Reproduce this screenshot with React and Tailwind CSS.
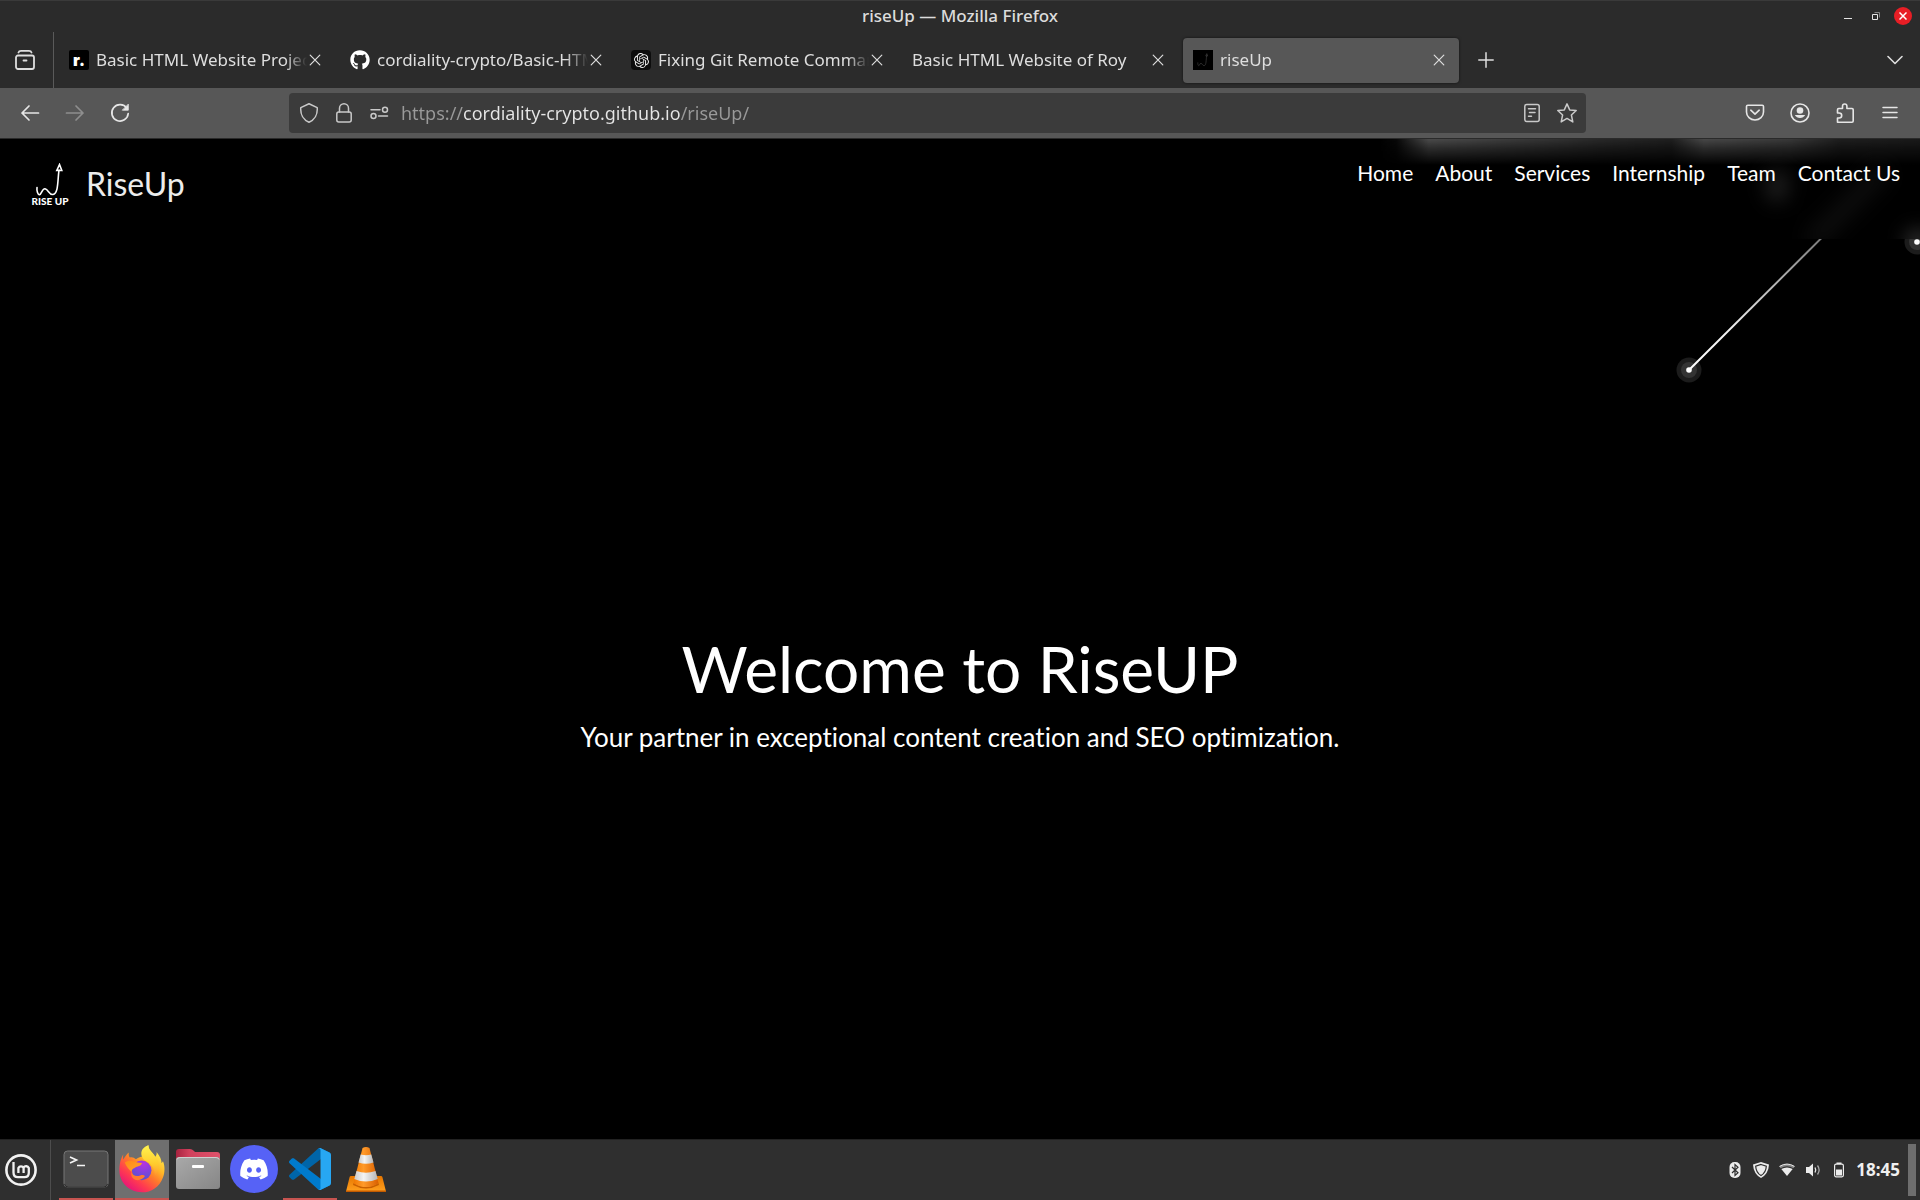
import React from "react";
import { FaGithub, FaDiscord } from "react-icons/fa";
import { SiOpenai } from "react-icons/si";

/* ---------- small line icons ---------- */

function Line({ size = 20, box = 20, width = 1.5, children, className = "" }) {
  return (
    <svg
      width={size}
      height={size}
      viewBox={`0 0 ${box} ${box}`}
      fill="none"
      stroke="currentColor"
      strokeWidth={width}
      strokeLinecap="round"
      strokeLinejoin="round"
      className={`shrink-0 ${className}`}
      aria-hidden="true"
    >
      {children}
    </svg>
  );
}

const CloseGlyph = () => (
  <Line size={12} box={12} width={1.2}>
    <path d="M1.2 1.2 10.8 10.8M10.8 1.2 1.2 10.8" />
  </Line>
);

const RecentIcon = () => (
  <Line size={22} box={22} width={1.8}>
    <rect x="2" y="6.5" width="18" height="13.5" rx="2" />
    <path d="M4.500 3.500Q5 1.900 7 1.900H15Q17 1.900 17.500 3.500M9.500 11.500h3" />
  </Line>
);

const BackIcon = () => (
  <Line width={1.7}>
    <path d="M18.500 10H2M9 3 2 10l7 7" />
  </Line>
);

const ForwardIcon = () => (
  <Line width={1.7}>
    <path d="M1.500 10H18M11 3l7 7-7 7" />
  </Line>
);

const ReloadIcon = () => (
  <Line width={1.7}>
    <path d="M16.800 5.200A8.200 8.200 0 1 0 18.200 10.500" />
    <path d="M18.300 1.500V7.200H12.600Z" fill="currentColor" strokeWidth="0.8" />
  </Line>
);

const ShieldIcon = () => (
  <Line width={1.5}>
    <path d="M10 .8 18.200 4.600C18.800 11.500 15.500 17 10 19.200 4.500 17 1.200 11.500 1.800 4.600Z" />
  </Line>
);

const LockIcon = () => (
  <Line width={1.5}>
    <rect x="2.800" y="9" width="14.400" height="10" rx="2" />
    <path d="M5.500 9V5.300a4.500 4.500 0 0 1 9 0V9" />
  </Line>
);

const PermissionsIcon = () => (
  <Line width={1.5}>
    <circle cx="16" cy="6.800" r="2.500" />
    <circle cx="4.500" cy="13" r="2.500" />
    <path d="M2 6.800h9M9.500 13h9" />
  </Line>
);

const ReaderIcon = () => (
  <Line width={1.5}>
    <rect x="2.800" y="1.500" width="14.400" height="17" rx="2" />
    <path d="M6.500 5.800h7M7.500 9.500h5.500M6.500 13.200h3" />
  </Line>
);

const StarIcon = () => (
  <Line width={1.5}>
    <path d="M10 .9 12.700 6.900 19.200 7.500 14.400 12 15.800 18.900 10 15.400 4.200 18.900 5.600 12 .8 7.500 7.300 6.900Z" />
  </Line>
);

const PocketIcon = () => (
  <Line width={1.6}>
    <path d="M2.800 2.300H17.200Q18.500 2.300 18.500 3.600V9A8.500 8 0 0 1 1.500 9V3.600Q1.500 2.300 2.800 2.300ZM5.800 7.200 10 11.200 14.200 7.200" />
  </Line>
);

const AccountIcon = () => (
  <Line width={1.6}>
    <circle cx="10" cy="10" r="9" />
    <circle cx="10" cy="7.500" r="3.300" fill="currentColor" stroke="none" />
    <path d="M4.800 12H15.200A6 6 0 0 1 4.800 12Z" fill="currentColor" stroke="none" />
  </Line>
);

const PuzzleIcon = () => (
  <Line width={1.6}>
    <path d="M2.500 19.200V15h1.700a2.400 2.400 0 0 0 0-5H2.500V6.700Q2.500 5.500 3.700 5.500H7.500V3.200a2.200 2.200 0 0 1 4.400 0V5.500H17Q18.200 5.500 18.200 6.700V18Q18.200 19.200 17 19.200Z" />
  </Line>
);

const MenuIcon = () => (
  <Line width={1.5}>
    <path d="M3 4.500h14M3 9.500h14M3 14.500h14" />
  </Line>
);

/* ---------- browser chrome ---------- */

function TitleBar() {
  return (
    <header className="grid h-8 grid-cols-[1fr_auto_1fr] items-center border-t border-[#3a3a3a] px-2 pb-[2px]">
      <span />
      <span className="text-[17px] leading-6 font-medium text-[#dcdcdc]">riseUp — Mozilla Firefox</span>
      <div className="flex items-center justify-end gap-2 text-[#e4e4e4]">
        <button type="button" aria-label="Minimize" className="flex h-5 w-5 items-center justify-center">
          <svg width="10" height="10" viewBox="0 0 10 10" aria-hidden="true">
            <path d="M1 7h8v1H1z" fill="currentColor" />
          </svg>
        </button>
        <button type="button" aria-label="Restore" className="flex h-5 w-5 items-center justify-center">
          <svg width="10" height="10" viewBox="0 0 10 10" fill="none" aria-hidden="true">
            <path d="M3.500 1.500H8.500V6.500" stroke="#858585" />
            <path d="M1.500 3.500h5v5h-5z" stroke="currentColor" />
          </svg>
        </button>
        <button
          type="button"
          aria-label="Close window"
          className="flex h-[18px] w-[18px] items-center justify-center rounded-full bg-[#e81e25] text-white"
        >
          <svg width="8" height="8" viewBox="0 0 8 8" stroke="currentColor" strokeWidth="1.500" aria-hidden="true">
            <path d="M.5.5l7 7M7.500.5l-7 7" />
          </svg>
        </button>
      </div>
    </header>
  );
}

const ArrowMark = ({ className }) => (
  <svg viewBox="0 0 40 34" className={className} fill="none" stroke="currentColor" strokeWidth="1.600" aria-hidden="true">
    <path d="M7 24.500C6.500 28 8 32 9.500 31.800C11.500 31.500 12 25.500 15 25.800C18.500 26.500 19 32 23 31.500C28.500 30.500 27.500 18 29 7" strokeLinecap="round" />
    <path d="M29.500 1.500 26.800 7.500H31.800Z" />
  </svg>
);

const tabs = [
  {
    title: "Basic HTML Website Project",
    icon: (
      <span className="flex h-5 w-5 items-center justify-center rounded-xs bg-black font-['Inter',sans-serif] text-base leading-5 font-black text-white">
        r.
      </span>
    ),
  },
  { title: "cordiality-crypto/Basic-HTML", icon: <FaGithub size={20} color="#fff" /> },
  {
    title: "Fixing Git Remote Command",
    icon: (
      <span className="flex h-5 w-5 items-center justify-center rounded-sm bg-[#0d0d0d]">
        <SiOpenai size={15} color="#f0f0f0" />
      </span>
    ),
  },
  { title: "Basic HTML Website of Roy" },
  {
    title: "riseUp",
    active: true,
    icon: (
      <span className="flex h-5 w-5 items-center justify-center bg-black text-[#444]">
        <ArrowMark className="w-4" />
      </span>
    ),
  },
];

function Tab({ title, icon, active }) {
  return (
    <div
      className={`flex h-[45px] w-[276px] min-w-0 items-center rounded pr-3 pl-[10px] ${
        active ? "bg-[#575757] shadow-[0_0_3px_rgba(0,0,0,0.6)]" : ""
      }`}
    >
      <button type="button" role="tab" aria-selected={Boolean(active)} className="flex min-w-0 flex-1 items-center gap-[7px]">
        {icon && <span className="shrink-0">{icon}</span>}
        <span className="flex-1 overflow-hidden mask-r-from-[calc(100%-22px)] text-left text-[17px] leading-6 whitespace-nowrap text-[#dedede]">
          {title}
        </span>
      </button>
      <button type="button" aria-label={`Close ${title}`} className="flex h-6 w-4 shrink-0 items-center justify-center text-[#dedede]">
        <CloseGlyph />
      </button>
    </div>
  );
}

function TabStrip() {
  return (
    <div className="flex h-14 items-center text-[#dedede]">
      <div className="flex w-[54px] shrink-0 self-stretch border-r border-[#5a5a5a] pr-[3px]">
        <button type="button" aria-label="Recent browsing" className="flex flex-1 items-center justify-center">
          <RecentIcon />
        </button>
      </div>
      <div role="tablist" className="ml-[5px] flex min-w-0 gap-[5px]">
        {tabs.map((tab) => (
          <Tab key={tab.title} {...tab} />
        ))}
      </div>
      <button type="button" aria-label="New tab" className="ml-[9px] flex h-9 w-9 items-center justify-center">
        <Line size={16} box={16} width={1.5}>
          <path d="M8 .8v14.400M.8 8h14.400" />
        </Line>
      </button>
      <button type="button" aria-label="List all tabs" className="mr-[7px] ml-auto flex h-9 w-9 items-center justify-center">
        <Line size={16} box={16} width={1.6}>
          <path d="M1 4.500 8 11.500 15 4.500" />
        </Line>
      </button>
    </div>
  );
}

function ToolButton({ label, dim, children }) {
  return (
    <button
      type="button"
      aria-label={label}
      className={`flex h-10 w-10 items-center justify-center ${dim ? "text-[#8e8e8e]" : "text-[#e6e6e6]"}`}
    >
      {children}
    </button>
  );
}

function UrlButton({ label, children }) {
  return (
    <button type="button" aria-label={label} className="flex h-10 w-[35px] shrink-0 items-center justify-center">
      {children}
    </button>
  );
}

function Toolbar() {
  return (
    <div className="flex h-[51px] items-center border-b border-[#2a2a2a] bg-[#575757] px-[10px]">
      <div className="flex gap-[5px]">
        <ToolButton label="Back"><BackIcon /></ToolButton>
        <ToolButton label="Forward" dim><ForwardIcon /></ToolButton>
        <ToolButton label="Reload"><ReloadIcon /></ToolButton>
      </div>
      <div className="mx-[149px] flex h-10 min-w-0 flex-1 items-center rounded bg-[#3b3b3b] px-[2px] text-[#c9c9c9]">
        <UrlButton label="Tracking protection"><ShieldIcon /></UrlButton>
        <UrlButton label="Connection security"><LockIcon /></UrlButton>
        <UrlButton label="Permissions"><PermissionsIcon /></UrlButton>
        <input
          type="text"
          aria-label="Address"
          defaultValue="https://cordiality-crypto.github.io/riseUp/"
          className="ml-[5px] min-w-0 flex-1 bg-[linear-gradient(90deg,#9a9a9a_62px,#e6e6e6_62px,#e6e6e6_280px,#9a9a9a_280px)] bg-clip-text text-lg text-transparent outline-none"
        />
        <UrlButton label="Reader view"><ReaderIcon /></UrlButton>
        <UrlButton label="Bookmark this page"><StarIcon /></UrlButton>
      </div>
      <div className="flex gap-[5px]">
        <ToolButton label="Save to Pocket"><PocketIcon /></ToolButton>
        <ToolButton label="Account"><AccountIcon /></ToolButton>
        <ToolButton label="Extensions"><PuzzleIcon /></ToolButton>
        <ToolButton label="Menu"><MenuIcon /></ToolButton>
      </div>
    </div>
  );
}

/* ---------- web page ---------- */

const links = ["Home", "About", "Services", "Internship", "Team", "Contact Us"];

function HeaderGlow() {
  return (
    <svg width="540" height="100" viewBox="0 0 540 100" className="pointer-events-none absolute top-0 right-0" aria-hidden="true">
      <defs>
        <linearGradient id="band" x1="0" x2="1" y1="0" y2="0">
          <stop offset="0" stopColor="#fff" stopOpacity="0" />
          <stop offset="0.030" stopColor="#fff" stopOpacity="0.030" />
          <stop offset="0.090" stopColor="#fff" stopOpacity="0.290" />
          <stop offset="0.150" stopColor="#fff" stopOpacity="0.270" />
          <stop offset="0.400" stopColor="#fff" stopOpacity="0.160" />
          <stop offset="0.540" stopColor="#fff" stopOpacity="0.120" />
          <stop offset="0.600" stopColor="#fff" stopOpacity="0.280" />
          <stop offset="0.760" stopColor="#fff" stopOpacity="0.220" />
          <stop offset="0.850" stopColor="#fff" stopOpacity="0.120" />
          <stop offset="1" stopColor="#fff" stopOpacity="0.100" />
        </linearGradient>
        <linearGradient id="fall" x1="0" x2="0" y1="0" y2="1">
          <stop offset="0" stopColor="#fff" />
          <stop offset="0.350" stopColor="#fff" stopOpacity="0.600" />
          <stop offset="1" stopColor="#fff" stopOpacity="0" />
        </linearGradient>
        <mask id="fade">
          <rect width="540" height="26" fill="url(#fall)" />
        </mask>
        <filter id="soft" x="-100%" y="-100%" width="300%" height="300%">
          <feGaussianBlur stdDeviation="10" />
        </filter>
      </defs>
      <rect width="540" height="26" fill="url(#band)" mask="url(#fade)" />
      <g filter="url(#soft)">
        <ellipse cx="397" cy="47" rx="11" ry="16" fill="#fff" fillOpacity="0.130" />
        <path d="M430 104 505 30" stroke="#fff" strokeOpacity="0.050" strokeWidth="20" />
        <circle cx="538" cy="103" r="12" fill="#fff" fillOpacity="0.220" />
      </g>
    </svg>
  );
}

function Particles() {
  return (
    <svg width="260" height="160" viewBox="0 0 260 160" className="pointer-events-none absolute top-0 right-0" aria-hidden="true">
      <defs>
        <linearGradient id="trail" gradientUnits="userSpaceOnUse" x1="160" y1="0" x2="29" y2="131">
          <stop offset="0" stopColor="#7c7c7c" />
          <stop offset="0.700" stopColor="#f0f0f0" />
          <stop offset="1" stopColor="#fff" />
        </linearGradient>
      </defs>
      {[[29, 131], [257, 3]].map(([x, y]) => (
        <g key={x}>
          <circle cx={x} cy={y} r="12.500" fill="#1c1c1c" />
          <circle cx={x} cy={y} r="8" fill="#333" />
          <circle cx={x} cy={y} r="2.800" fill="#fff" />
        </g>
      ))}
      <path d="M162.500-2 29 131" stroke="url(#trail)" strokeWidth="2" />
    </svg>
  );
}

function WebPage() {
  return (
    <div className="flex flex-1 flex-col bg-black font-['Lato',sans-serif] text-white [font-variant-ligatures:none]">
      <header className="relative flex h-[100px] items-start justify-between overflow-hidden pr-5 pl-7">
        <HeaderGlow />
        <a href="#home" className="relative flex items-center gap-[14px] pt-6 text-[32px] leading-[42px] text-[#ececec]">
          <span className="flex w-11 flex-col items-center text-white">
            <ArrowMark className="w-10" />
            <span className="text-[10px] leading-[8px] font-black whitespace-nowrap">RISE UP</span>
          </span>
          RiseUp
        </a>
        <nav aria-label="Main" className="relative pt-[19px]">
          <ul className="flex gap-[22px]">
            {links.map((link) => (
              <li key={link}>
                <a href={`#${link}`} className="text-[21px] leading-[30px]">{link}</a>
              </li>
            ))}
          </ul>
        </nav>
      </header>
      <main className="relative flex flex-1 flex-col items-center justify-center gap-[14px] pt-[10px]">
        <Particles />
        <h1 className="text-[64px] leading-[72px]">Welcome to RiseUP</h1>
        <p className="text-[26px] leading-9">Your partner in exceptional content creation and SEO optimization.</p>
      </main>
    </div>
  );
}

/* ---------- desktop panel ---------- */

const MintLogo = () => (
  <svg width="32" height="32" viewBox="0 0 32 32" fill="none" stroke="#f2f2f2" aria-hidden="true">
    <circle cx="16" cy="16" r="14.600" strokeWidth="2.600" />
    <path d="M8.500 8V18.500Q8.500 23.200 13 23.200H19.500Q23.800 23.200 23.800 18.800V14A3 3 0 0 0 18.600 13.500V19M18.600 14A2.900 2.900 0 0 0 13.400 14V19" strokeWidth="2.300" />
  </svg>
);

const TerminalIcon = () => (
  <svg width="46" height="38" viewBox="0 0 46 38" aria-hidden="true">
    <rect x="1" y="1" width="44" height="36" rx="3.500" fill="#4c4c4c" stroke="#777" />
    <path d="M1.500 34Q2 37 5 37H41Q44 37 44.500 34" fill="none" stroke="#2a2a2a" />
    <path d="M7 7 13.500 10 7 13M14 15.500H22" fill="none" stroke="#f5f5f5" strokeWidth="1.700" />
  </svg>
);

const FirefoxIcon = () => (
  <svg width="46" height="48" viewBox="0 0 136 142" aria-hidden="true">
    <defs>
      <linearGradient id="ffBody" x1="0.850" y1="0.100" x2="0.200" y2="0.950">
        <stop offset="0" stopColor="#fff14f" />
        <stop offset="0.300" stopColor="#ffb827" />
        <stop offset="0.500" stopColor="#ff7a2b" />
        <stop offset="0.750" stopColor="#ff3a50" />
        <stop offset="1" stopColor="#e5127c" />
      </linearGradient>
      <radialGradient id="ffGlobe" cx="0.600" cy="0.150" r="0.900">
        <stop offset="0" stopColor="#b833e1" />
        <stop offset="0.500" stopColor="#8341dd" />
        <stop offset="1" stopColor="#5157c9" />
      </radialGradient>
      <linearGradient id="ffFace" x1="0" y1="0" x2="1" y2="1">
        <stop offset="0" stopColor="#ff8a16" />
        <stop offset="1" stopColor="#ffa52d" />
      </linearGradient>
      <linearGradient id="ffTail" x1="0.500" y1="0" x2="0.500" y2="1">
        <stop offset="0" stopColor="#fff44f" />
        <stop offset="0.600" stopColor="#ffcb2d" />
        <stop offset="1" stopColor="#ff9640" stopOpacity="0" />
      </linearGradient>
    </defs>
    <path
      d="M13 27C11 34 12 40 13 43C18 33 23 27 29 22C28 29 29 34 32 37C39 35 45 38 50 42C58 36 65 35 70 35C64 24 72 8 87 1C87 16 99 20 107 35C111 31 112 26 111 21C121 33 126 43 126 54L130 48C137 62 135 85 130 96C119 125 96 140 68 140C30 140 1 111 1 75C1 60 4 40 13 27Z"
      fill="url(#ffBody)"
    />
    <path d="M87 1C87 16 99 20 107 35C120 51 118 79 106 94C107 75 98 56 82 49C68 43 61 25 70 12Q76 5 87 1Z" fill="url(#ffTail)" />
    <circle cx="67" cy="75" r="29" fill="url(#ffGlobe)" />
    <path d="M17 52C25 46 35 45 44 49Q54 53 68 53C67 60 58 63 50 65C47 69 38 69 37 79C30 74 22 64 17 52Z" fill="url(#ffFace)" />
    <path d="M37 79C40 92 52 94 63 90C69 87 74 89 77 92C70 104 54 107 45 101C37 96 34 88 37 79Z" fill="#ff7a30" />
  </svg>
);

const FolderIcon = () => (
  <svg width="46" height="42" viewBox="0 0 46 42" aria-hidden="true">
    <defs>
      <linearGradient id="fdBack" x1="0" x2="1">
        <stop offset="0" stopColor="#a82340" />
        <stop offset="0.300" stopColor="#d1405c" />
        <stop offset="1" stopColor="#e0526b" />
      </linearGradient>
      <linearGradient id="fdFront" x1="0" y1="0" x2="1" y2="1">
        <stop offset="0" stopColor="#a9a9a9" />
        <stop offset="1" stopColor="#868686" />
      </linearGradient>
    </defs>
    <path d="M1 4Q1 1 4 1H15Q17 1 19 3L20 4H42Q45 4 45 7V20H1Z" fill="url(#fdBack)" />
    <rect x="1" y="9" width="44" height="32" rx="3" fill="url(#fdFront)" />
    <path d="M2 11.500Q2.500 9.500 5 9.500H41Q43.500 9.500 44 11.500" fill="none" stroke="#cfcfcf" />
    <rect x="17" y="17" width="12" height="3" rx="1" fill="#fff" />
  </svg>
);

const DiscordIcon = () => (
  <span className="flex h-12 w-12 items-center justify-center rounded-full bg-[#5662f6]">
    <FaDiscord size={30} color="#fff" />
  </span>
);

const CodeIcon = () => (
  <svg width="42" height="42" viewBox="0 0 100 100" aria-hidden="true">
    <path fill="#0065A9" d="M96.460 10.800 75.860.880C73.470-.270 70.620.210 68.750 2.080L1.300 63.580C-.520 65.240-.510 68.090 1.300 69.750L6.810 74.750C8.300 76.100 10.530 76.200 12.130 74.990L93.360 13.370C96.090 11.300 100 13.250 100 16.670V16.430C100 14.030 98.620 11.840 96.460 10.800Z" />
    <path fill="#007ACC" d="M96.460 89.200 75.860 99.120C73.470 100.270 70.620 99.790 68.750 97.920L1.300 36.420C-.520 34.760-.510 31.910 1.300 30.250L6.810 25.250C8.300 23.900 10.530 23.800 12.130 25.010L93.360 86.630C96.090 88.700 100 86.750 100 83.330V83.570C100 85.970 98.620 88.160 96.460 89.200Z" />
    <path fill="#27a7f3" d="M75.860 99.130C73.470 100.270 70.620 99.790 68.750 97.920C71.060 100.220 75 98.590 75 95.330V4.670C75 1.410 71.060-.220 68.750 2.080C70.620.210 73.470-.270 75.860.870L96.460 10.780C98.620 11.820 100 14.010 100 16.410V83.590C100 85.990 98.620 88.180 96.460 89.220Z" />
  </svg>
);

const ConeIcon = () => (
  <svg width="42" height="46" viewBox="0 0 42 46" aria-hidden="true">
    <defs>
      <linearGradient id="cone" x1="0" x2="1">
        <stop offset="0" stopColor="#f07800" />
        <stop offset="0.400" stopColor="#ff9a2a" />
        <stop offset="1" stopColor="#d95f00" />
      </linearGradient>
      <linearGradient id="stripe" x1="0" x2="1">
        <stop offset="0" stopColor="#c9c9c9" />
        <stop offset="0.400" stopColor="#f4f4f4" />
        <stop offset="1" stopColor="#b5b5b5" />
      </linearGradient>
      <linearGradient id="base" x1="0" y1="0" x2="0" y2="1">
        <stop offset="0" stopColor="#e67600" />
        <stop offset="1" stopColor="#ffa01e" />
      </linearGradient>
    </defs>
    <path d="M6 30H36Q37 30 37.400 31L41 45.500H1L4.600 31Q5 30 6 30Z" fill="url(#base)" />
    <path d="M1 44.500H41V46H1Z" fill="#c35b00" />
    <path d="M8.500 37Q21 45 33.500 37L34 39Q21 46 8 39Z" fill="#c96000" />
    <path d="M17.500 2Q21 0 24.500 2L33.500 37Q28 41 21 41T8.500 37Z" fill="url(#cone)" />
    <path d="M15.700 8.500Q21 10 26.300 8.500L28.500 16.500Q21 19 13.500 16.500Z" fill="url(#stripe)" />
    <path d="M11.500 25Q21 28.500 30.500 25L32.700 33Q21 38 9.300 33Z" fill="url(#stripe)" />
  </svg>
);

const apps = [
  { name: "Terminal", icon: <TerminalIcon />, running: true },
  { name: "Firefox", icon: <FirefoxIcon />, running: true, focused: true },
  { name: "Files", icon: <FolderIcon /> },
  { name: "Discord", icon: <DiscordIcon /> },
  { name: "Visual Studio Code", icon: <CodeIcon />, running: true },
  { name: "VLC", icon: <ConeIcon /> },
];

const tray = [
  {
    name: "Bluetooth",
    icon: (
      <svg width="12" height="16" viewBox="0 0 12 16" aria-hidden="true">
        <rect x="0.500" width="11" height="16" rx="5" fill="#ececec" />
        <path d="M3 5 9 10.800 6 13.500V2.500L9 5.200 3 11" fill="none" stroke="#2f2f2f" strokeWidth="1.200" />
      </svg>
    ),
  },
  {
    name: "Firewall",
    icon: (
      <svg width="16" height="16" viewBox="0 0 16 16" aria-hidden="true">
        <path d="M8 0 16 2.500Q15.500 12 8 16 .5 12 0 2.500Z" fill="#ececec" />
        <path d="M8 2.500 13.300 4.200Q13 10.500 8 13.600 3 10.500 2.700 4.200Z" fill="#ececec" stroke="#2f2f2f" strokeWidth="1.200" />
      </svg>
    ),
  },
  {
    name: "Wi-Fi",
    icon: (
      <svg width="16" height="16" viewBox="0 0 16 16" aria-hidden="true">
        <path d="M.3 4.500Q8-.5 15.700 4.500L14.300 6.200Q8 2.500 1.700 6.200Z" fill="#8a8a8a" />
        <path d="M.5 4.400Q8-.3 15.500 4.400" fill="none" stroke="#ececec" />
        <path d="M2.300 7Q8 3.800 13.700 7L8 14Z" fill="#ececec" />
      </svg>
    ),
  },
  {
    name: "Volume",
    icon: (
      <svg width="16" height="16" viewBox="0 0 16 16" aria-hidden="true">
        <path d="M1 5H4L8 1.500V14.500L4 11H1Z" fill="#ececec" />
        <path d="M10 5.500Q11.500 8 10 10.500" fill="none" stroke="#ececec" strokeWidth="1.300" />
        <path d="M12.500 3.500Q15.800 8 12.500 12.500" fill="none" stroke="#a8a8a8" strokeWidth="1.300" />
      </svg>
    ),
  },
  {
    name: "Battery",
    icon: (
      <svg width="12" height="16" viewBox="0 0 12 16" aria-hidden="true">
        <path d="M3.500.5h5V2h-5z" fill="#ececec" />
        <rect x="1.600" y="2.200" width="8.800" height="12.600" rx="1.500" fill="none" stroke="#ececec" strokeWidth="1.200" />
        <path d="M3 7.500h6v6H3z" fill="#ececec" />
      </svg>
    ),
  },
];

function Panel() {
  return (
    <footer className="flex h-[61px] items-stretch border-t border-[#222] bg-[#2f2f2f]">
      <button type="button" aria-label="Menu" className="flex w-[51px] items-center border-r border-[#4d4d4d] pl-[5px]">
        <MintLogo />
      </button>
      <div className="ml-2 flex gap-[2px]">
        {apps.map(({ name, icon, running, focused }) => (
          <button
            key={name}
            type="button"
            aria-label={name}
            className={`flex w-[54px] items-center justify-center border-b-2 ${running ? "border-[#c75450]" : "border-transparent"} ${
              focused ? "bg-[#6f6f6f]" : ""
            }`}
          >
            {icon}
          </button>
        ))}
      </div>
      <div className="ml-auto flex items-center gap-2">
        {tray.map(({ name, icon }) => (
          <button key={name} type="button" aria-label={name} className="flex h-6 w-[18px] items-center justify-center">
            {icon}
          </button>
        ))}
        <time className="text-[17px] leading-6 font-bold text-[#f0f0f0]">18:45</time>
      </div>
      <button type="button" aria-label="Show desktop" className="mx-1 my-1 ml-2 w-2 bg-[#6e6e6e]" />
    </footer>
  );
}

export default function App() {
  return (
    <div className="flex min-h-screen flex-col bg-[#2b2b2b] font-['Noto_Sans',sans-serif]">
      <TitleBar />
      <TabStrip />
      <Toolbar />
      <WebPage />
      <Panel />
    </div>
  );
}
